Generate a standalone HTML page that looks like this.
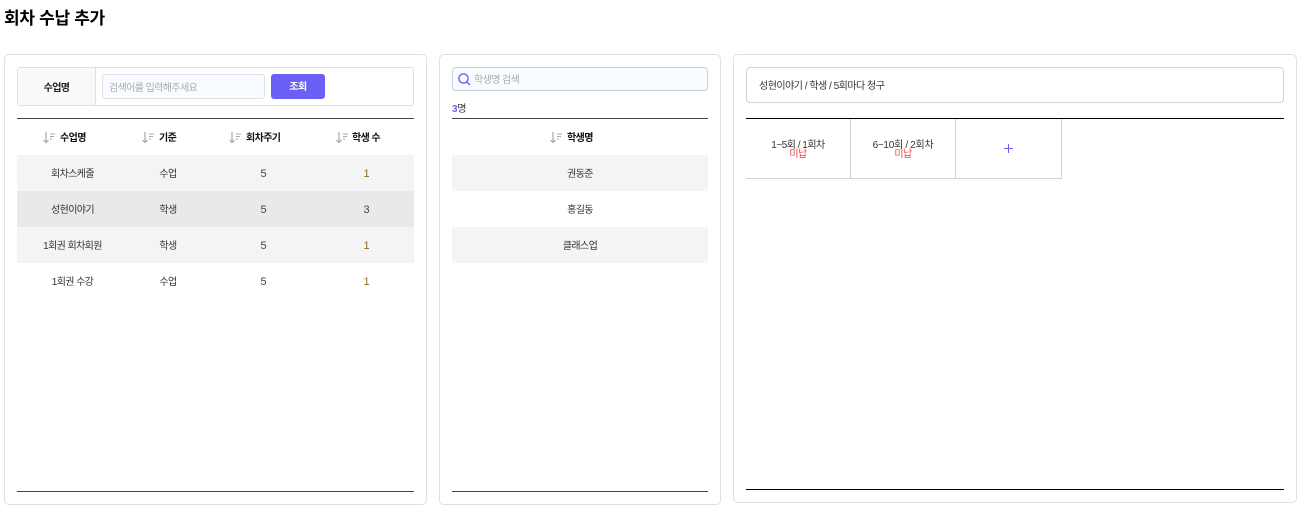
<!DOCTYPE html>
<html lang="ko"><head><meta charset="utf-8"><title>회차 수납 추가</title>
<style>
*{box-sizing:border-box}
html,body{margin:0;padding:0;background:#fff}
body{width:1305px;height:509px;position:relative;overflow:hidden;font-family:"Liberation Sans","Noto Sans CJK KR",sans-serif;font-size:10px;color:#333}
.a{position:absolute}
.t{position:absolute;white-space:nowrap;line-height:14px;height:14px;margin-top:3px;transform:translateX(-50%);letter-spacing:-.6px}
.l{position:absolute;white-space:nowrap;line-height:14px;height:14px;margin-top:3px;letter-spacing:-.6px}
.n{font-size:11px;letter-spacing:0;margin-top:2px;color:#444}
.o{color:#8f6a1e}
.panel{position:absolute;border:1px solid #e0e0e0;border-radius:5px;background:#fff}
.row{position:absolute;height:36px}
.h{font-weight:700;color:#111}
svg{position:absolute;display:block}
</style></head><body>
<div class="l" style="left:4px;top:5px;height:22px;line-height:22px;font-size:17px;font-weight:700;color:#000;letter-spacing:-.3px">회차 수납 추가</div>

<div class="panel" style="left:4px;top:54px;width:423px;height:451px"></div>
<div class="panel" style="left:439px;top:54px;width:282px;height:451px"></div>
<div class="panel" style="left:733px;top:54px;width:564px;height:449px"></div>

<!-- left search -->
<div class="a" style="left:17px;top:67px;width:397px;height:39px;border:1px solid #e0e0e0;border-radius:3px"></div>
<div class="a" style="left:18px;top:68px;width:78px;height:37px;background:#f9f9f9;border-right:1px solid #e0e0e0"></div>
<div class="t h" style="left:56.5px;top:79px;color:#222">수업명</div>
<div class="a" style="left:102px;top:74px;width:163px;height:25px;background:#f8fbff;border:1px solid #dfe1e6;border-radius:3px"></div>
<div class="l" style="left:109px;top:79px;color:#aaa">검색어를 입력해주세요</div>
<div class="a" style="left:271px;top:74px;width:54px;height:25px;background:#6c5ff5;border-radius:3px"></div>
<div class="t" style="left:298px;top:78px;color:#fff;font-weight:700">조회</div>

<div class="a" style="left:17px;top:118px;width:397px;height:1px;background:#444"></div>
<!-- sort headers -->
<svg style="left:43px;top:131px" width="14" height="13" viewBox="0 0 14 13" fill="none" stroke="#a8a8a8"><path d="M3 1V11.500M.5 9L3 11.500L5.500 9" stroke-width="1.200"/><path d="M7 3H12M7 5.500H11M7 8H9"/></svg>
<div class="l h" style="left:60px;top:129px">수업명</div>
<svg style="left:142px;top:131px" width="14" height="13" viewBox="0 0 14 13" fill="none" stroke="#a8a8a8"><path d="M3 1V11.500M.5 9L3 11.500L5.500 9" stroke-width="1.200"/><path d="M7 3H12M7 5.500H11M7 8H9"/></svg>
<div class="l h" style="left:159px;top:129px">기준</div>
<svg style="left:229px;top:131px" width="14" height="13" viewBox="0 0 14 13" fill="none" stroke="#a8a8a8"><path d="M3 1V11.500M.5 9L3 11.500L5.500 9" stroke-width="1.200"/><path d="M7 3H12M7 5.500H11M7 8H9"/></svg>
<div class="l h" style="left:246px;top:129px">회차주기</div>
<svg style="left:336px;top:131px" width="14" height="13" viewBox="0 0 14 13" fill="none" stroke="#a8a8a8"><path d="M3 1V11.500M.5 9L3 11.500L5.500 9" stroke-width="1.200"/><path d="M7 3H12M7 5.500H11M7 8H9"/></svg>
<div class="l h" style="left:352px;top:129px">학생 수</div>

<div class="row" style="left:17px;top:155px;width:397px;background:#f4f4f4"></div>
<div class="row" style="left:17px;top:191px;width:397px;background:#e9e9e9"></div>
<div class="row" style="left:17px;top:227px;width:397px;background:#f4f4f4"></div>

<div class="t" style="left:72.500px;top:165px">회차스케줄</div><div class="t" style="left:168px;top:165px">수업</div><div class="t n" style="left:263.500px;top:165px">5</div><div class="t n o" style="left:366.500px;top:165px">1</div>
<div class="t" style="left:72.500px;top:201px">성현이야기</div><div class="t" style="left:168px;top:201px">학생</div><div class="t n" style="left:263.500px;top:201px">5</div><div class="t n" style="left:366.500px;top:201px">3</div>
<div class="t" style="left:72.500px;top:237px">1회권 회차회원</div><div class="t" style="left:168px;top:237px">학생</div><div class="t n" style="left:263.500px;top:237px">5</div><div class="t n o" style="left:366.500px;top:237px">1</div>
<div class="t" style="left:72.500px;top:273px">1회권 수강</div><div class="t" style="left:168px;top:273px">수업</div><div class="t n" style="left:263.500px;top:273px">5</div><div class="t n o" style="left:366.500px;top:273px">1</div>

<div class="a" style="left:17px;top:491px;width:397px;height:1px;background:#444"></div>

<!-- middle -->
<div class="a" style="left:452px;top:67px;width:256px;height:24px;background:#f8fbff;border:1px solid #ccd0d6;border-radius:4px"></div>
<svg style="left:458px;top:73px" width="14" height="14" viewBox="0 0 14 14" fill="none" stroke="#6c5ff5" stroke-width="1.400"><circle cx="5.500" cy="5.500" r="4.600"/><path d="M8.800 8.800L12 12"/></svg>
<div class="l" style="left:474px;top:71px;color:#aaa">학생명 검색</div>
<div class="l" style="left:452px;top:100px;letter-spacing:-.3px"><span style="color:#6c5ff5;font-weight:700">3</span>명</div>
<div class="a" style="left:452px;top:118px;width:256px;height:1px;background:#444"></div>
<svg style="left:550px;top:131px" width="14" height="13" viewBox="0 0 14 13" fill="none" stroke="#a8a8a8"><path d="M3 1V11.500M.5 9L3 11.500L5.500 9" stroke-width="1.200"/><path d="M7 3H12M7 5.500H11M7 8H9"/></svg>
<div class="l h" style="left:567px;top:129px">학생명</div>
<div class="row" style="left:452px;top:155px;width:256px;background:#f4f4f4"></div>
<div class="row" style="left:452px;top:227px;width:256px;background:#f4f4f4"></div>
<div class="t" style="left:580px;top:165px">권동준</div>
<div class="t" style="left:580px;top:201px">홍길동</div>
<div class="t" style="left:580px;top:237px">클래스업</div>
<div class="a" style="left:452px;top:491px;width:256px;height:1px;background:#444"></div>

<!-- right -->
<div class="a" style="left:746px;top:67px;width:538px;height:36px;border:1px solid #d2d2d2;border-radius:4px"></div>
<div class="l" style="left:759px;top:77px;letter-spacing:-.5px">성현이야기 / 학생 / 5회마다 청구</div>
<div class="a" style="left:746px;top:118px;width:538px;height:1px;background:#000"></div>
<div class="a" style="left:746px;top:178px;width:316px;height:1px;background:#d2d2d2"></div>
<div class="a" style="left:850px;top:119px;width:1px;height:60px;background:#d2d2d2"></div>
<div class="a" style="left:955px;top:119px;width:1px;height:60px;background:#d2d2d2"></div>
<div class="a" style="left:1061px;top:119px;width:1px;height:60px;background:#d2d2d2"></div>
<div class="t" style="left:798px;top:136px;letter-spacing:-.5px">1~5회 / 1회차</div>
<div class="t" style="left:798px;top:145px;color:#ef4444">미납</div>
<div class="t" style="left:903px;top:136px;letter-spacing:-.3px">6~10회 / 2회차</div>
<div class="t" style="left:903px;top:145px;color:#ef4444">미납</div>
<svg style="left:1004px;top:144px" width="9" height="9" viewBox="0 0 9 9" fill="none" stroke="#6c5ff5" stroke-width="1"><path d="M4.500 0V9M0 4.500H9"/></svg>
<div class="a" style="left:746px;top:489px;width:538px;height:1px;background:#000"></div>
</body></html>
